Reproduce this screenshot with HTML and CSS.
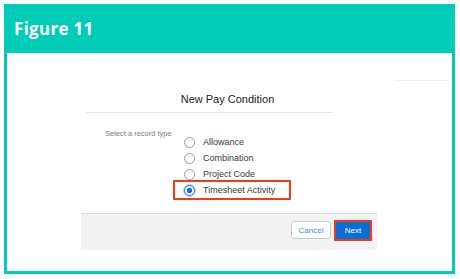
FILE: index.html
```html
<!DOCTYPE html>
<html>
<head>
	<meta charset="utf-8">
	<title>Figure 11</title>
	<link rel="stylesheet" href="styles.css">
</head>
<body>
	<div class="frame">
		<div class="frameHeader">
			<h1 class="figTitle">Figure 11</h1>
		</div>
		<div class="panel">
			<div class="stray"></div>
			<div class="modal">
				<h2 class="modalTitle">New Pay Condition</h2>
				<div class="divider"></div>
				<div class="modalBody">
					<div class="fieldLabel">Select a record type</div>
					<div class="radioList">
						<label class="radioItem"><span class="radio"></span>Allowance</label>
						<label class="radioItem"><span class="radio"></span>Combination</label>
						<label class="radioItem"><span class="radio"></span>Project Code</label>
						<label class="radioItem selected"><span class="radio checked"></span>Timesheet Activity</label>
					</div>
				</div>
				<div class="modalFooter">
					<button type="button" class="btn btnCancel">Cancel</button>
					<button type="button" class="btn btnNext">Next</button>
				</div>
			</div>
		</div>
	</div>
</body>
</html>
```

FILE: styles.css
```css
body{
	margin: 0;
	background: #fff;
	font-family: "Liberation Sans", Arial, sans-serif;
}
.frame{
	margin: 4px 5px 5px 4px;
	height: 270px;
	box-sizing: border-box;
	border: 3px solid #00ccb8;
	border-top: none;
	display: flex;
	flex-direction: column;
}
.frameHeader{
	height: 49px;
	margin: 0 -3px;
	background: #00ccb8;
	padding-left: 10px;
	display: flex;
	align-items: center;
}
.figTitle{
	margin: 0;
	color: #fff;
	font: 700 17px "Open Sans", sans-serif;
	letter-spacing: 0.3px;
}
.panel{
	flex: 1;
	background: #fff;
}
.stray{
	width: 55px;
	height: 1px;
	margin: 27px 2px 0 auto;
	background: #f0f0f0;
}
.modal{
	width: 296px;
	margin-left: 74px;
}
.modalTitle{
	margin: 11px 0 0 0;
	font-weight: normal;
	font-size: 11px;
	line-height: 14px;
	color: #222;
	text-align: center;
	padding-right: 3px;
}
.divider{
	width: 247px;
	height: 1px;
	margin: 6px 0 0 5px;
	background: #e6e6e6;
}
.modalBody{
	display: flex;
	align-items: flex-start;
	margin-top: 16px;
}
.fieldLabel{
	width: 70px;
	margin-left: 24px;
	font-size: 7.5px;
	line-height: 10px;
	color: #808080;
	white-space: nowrap;
}
.radioList{
	padding-top: 5px;
	width: 114px;
}
.radioItem{
	display: flex;
	align-items: center;
	height: 16px;
	padding-left: 9px;
	font-size: 9px;
	color: #3a3a3a;
}
.radioItem.selected{
	outline: 2px solid #f2391c;
}
.radio{
	width: 9px;
	height: 9px;
	border: 1px solid #9a9a9a;
	border-radius: 50%;
	margin-right: 8px;
	background: #fff;
}
.radio.checked{
	border-color: #1b6fd0;
	background: radial-gradient(circle, #1b6fd0 0 2.5px, #fff 3px);
	box-shadow: 0 0 0 1px #b9d3f2;
}
.modalFooter{
	margin-top: 15px;
	height: 29px;
	border-top: 1px solid #dcdcdc;
	background: #f3f3f3;
	display: flex;
	justify-content: flex-end;
	align-items: flex-start;
	padding: 7px 5px 0 0;
	box-sizing: content-box;
}
.btn{
	font-family: "Liberation Sans", Arial, sans-serif;
	font-size: 8px;
	border-radius: 3px;
	padding: 0;
	cursor: pointer;
}
.btnCancel{
	width: 40px;
	height: 18px;
	background: #fff;
	border: 1px solid #c9c9c9;
	color: #3f8de0;
}
.btnNext{
	width: 34px;
	height: 17px;
	margin: 1px 2px 0 5px;
	background: #0a6fd4;
	border: none;
	border-radius: 0;
	color: #fff;
	outline: 2px solid #f2391c;
}
```
